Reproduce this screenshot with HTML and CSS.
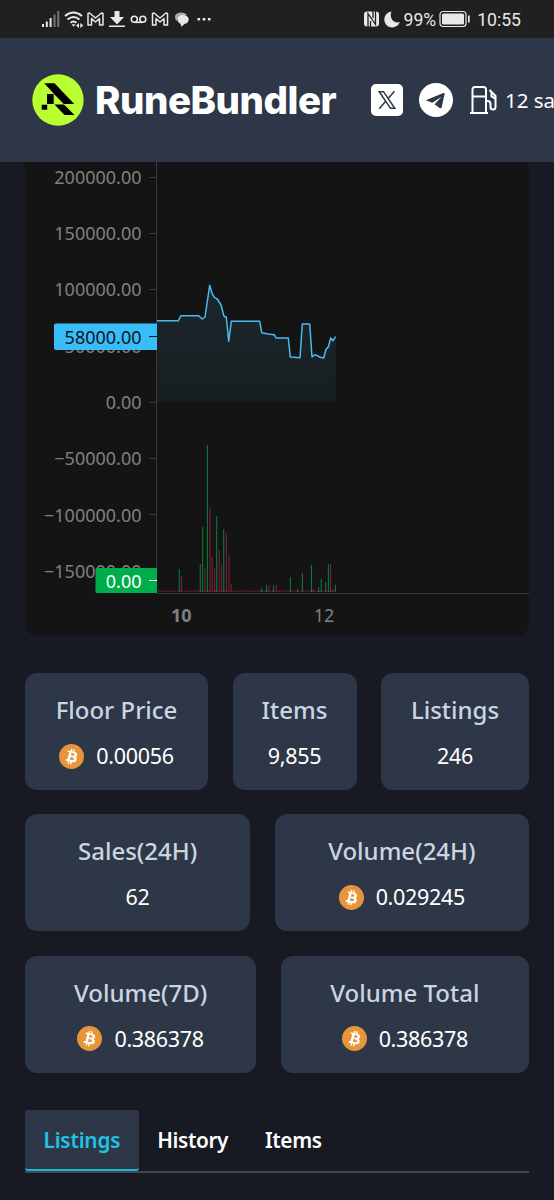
FILE: index.html
```html
<!DOCTYPE html>
<html lang="en">
<head>
  <meta charset="UTF-8">
  <meta name="viewport" content="width=device-width, initial-scale=1.0">
  <title>RuneBundler</title>
  <link rel="stylesheet" href="styles.css">
</head>
<body>
  <!-- shared bitcoin icon -->
  <svg class="defs" width="0" height="0">
    <symbol id="btc" viewBox="0 0 32 32">
      <circle cx="16" cy="16" r="16" fill="#e8953a"/>
      <path fill="#fff" fill-rule="evenodd" d="M23.19 14.02c.31-2.1-1.28-3.23-3.47-3.98l.71-2.85-1.73-.43-.69 2.77c-.46-.11-.93-.22-1.39-.33l.7-2.79-1.74-.43-.7 2.84c-.38-.09-.75-.17-1.11-.26l-2.39-.6-.46 1.85s1.28.3 1.26.31c.7.18.83.64.81 1.01l-1.97 7.89c-.08.22-.31.54-.8.41.02.03-1.26-.31-1.26-.31l-.86 1.99 2.26.56c.42.11.83.22 1.23.32l-.71 2.88 1.73.43.71-2.85c.47.13.93.25 1.38.36l-.71 2.83 1.74.44.71-2.88c2.96.56 5.18.33 6.12-2.34.75-2.16-.04-3.4-1.6-4.21 1.14-.26 2-1.01 2.23-2.56zm-3.96 5.56c-.54 2.15-4.16.99-5.33.7l.95-3.81c1.17.29 4.94.87 4.38 3.11zm.53-5.59c-.49 1.96-3.5.96-4.48.72l.86-3.46c.98.25 4.13.7 3.62 2.74z"/>
    </symbol>
  </svg>

  <div class="statusbar">
    <svg class="status-left" width="172" height="20" viewBox="40 9 172 20" fill="none" stroke="#e8e8e8">
      <path stroke-width="2" d="M43 24v3M46.8 21.500v5.500M50.600 18v9"/>
      <path stroke="#777" stroke-width="2" d="M54.500 14.500v12.500M58.300 11v16"/>
      <path stroke-width="2" d="M65 16q8.500-7 17 0M67.500 19.500q6-5 12 0M70.500 22.700q3-2.500 6 0"/>
      <path fill="#e8e8e8" stroke="none" d="M71.500 24.200h4l-2 2.600zM79 23l-3 2.500 3 2.500zM80.300 23l3 2.500-3 2.500z"/>
      <path id="mail" stroke-width="1.500" stroke-linejoin="round" d="M88 25V13.500l1.500-.5 6 5 6-5 1.500.5V25h-3.500v-6.500l-4 3.500-4-3.500V25z"/>
      <path fill="#e8e8e8" stroke="none" d="M114.500 11h5v6h4.500l-7 7.500-7-7.500h4.500zM109 25.500h16v1.500h-16z"/>
      <circle cx="134.300" cy="19.300" r="3" stroke-width="1.600"/>
      <circle cx="142.800" cy="19.300" r="3" stroke-width="1.600"/>
      <path stroke-width="1.600" d="M134.300 22.300h8.500"/>
      <use href="#mail" x="64.500"/>
      <path fill="#aaa" stroke="none" d="M175 17c0-5.500 10-6 12-2l-8 1-2 5q-2-1-2-4z"/>
      <path fill="#e8e8e8" stroke="none" d="M177.500 19c0-5.500 11-5.500 11.200.2 0 3-2 4.300-4 4.600l-3.200 3-1-3q-3-1-3-4.800z"/>
      <path fill="#e8e8e8" stroke="none" d="M197.500 18h2.600v2.600h-2.600zM202.700 18h2.600v2.600h-2.600zM207.900 18h2.600v2.600h-2.600z"/>
    </svg>
    <div class="status-right">
      <svg width="38" height="20" viewBox="363 9 38 20">
        <rect x="364" y="11.500" width="15" height="15" rx="3" fill="#e8e8e8"/>
        <path fill="none" stroke="#202020" stroke-width="1.300" d="M368 27V13.500l7.500 11V11M370.500 27v-6M373 11v7"/>
        <path fill="#e8e8e8" d="M391.500 11.500a8 8 0 1 0 8.300 10.500c-6 2-11-4-8.300-10.500z"/>
      </svg>
      <span class="percent">99%</span>
      <svg width="32" height="18" viewBox="0 0 32 18">
        <rect x="1" y="1.500" width="26" height="15" rx="3" fill="none" stroke="#e8e8e8" stroke-width="1.200"/>
        <rect x="3" y="3.500" width="22" height="11" rx="1.500" fill="#e8e8e8"/>
        <path fill="#e8e8e8" d="M29 5.500h1.700v7H29z"/>
      </svg>
      <span class="clock">10:55</span>
    </div>
  </div>

  <header class="header">
    <svg class="logo" width="52" height="52" viewBox="32 74 52 52">
      <circle cx="58" cy="100" r="25.700" fill="#b8fe30"/>
      <path d="M44.300 83.300H54.500L74.300 104H63.800L54.500 94.500zM47 94h6.700v10H47zM41.700 104.700h5.500v5h-5.500zM54.500 104.500h9.500l10.500 10.500H64.500z"/>
    </svg>
    <h1 class="brand">RuneBundler</h1>
    <svg class="x-icon" width="32" height="32" viewBox="0 0 32 32">
      <rect width="32" height="32" rx="5" fill="#fff"/>
      <path fill="none" stroke="#2d3748" stroke-width="1.500" d="M8.200 7.700h4.300l11.300 16.600h-4.300zM23.500 7.200l-6.900 7.900M14.900 16.900l-6.700 7.900"/>
    </svg>
    <svg class="telegram" width="34" height="34" viewBox="0 0 34 34">
      <circle cx="17" cy="17" r="17" fill="#fff"/>
      <path fill="#2d3748" d="M6.700 17.200L24.500 10q1.500-.3 1.100 1.300L22.600 24.500q-.6 1.400-2 .5l-5-3.800 7-7.400-9.200 6z"/>
    </svg>
    <svg class="gas" width="28" height="30" viewBox="470 85 28 30" fill="none" stroke="#fff" stroke-width="2">
      <path d="M472.500 113V89.500q0-2.500 2.500-2.500h8.500q2.500 0 2.500 2.500V113M472.500 96.500H486M470 113h18M486 101h1.500q3 0 3 3v3q0 2.500 2.500 2.500t2.500-2.500V96l-6-6"/>
      <path d="M491.500 92.500v4l4 2"/>
    </svg>
    <span class="fee">12 sats/vB</span>
  </header>

  <main>
    <section class="chart">
      <svg width="504" height="474" viewBox="25 162 504 474">
        <defs>
          <linearGradient id="area" x1="0" y1="0" x2="0" y2="1">
            <stop offset="0" stop-color="#1c272d"/>
            <stop offset="1" stop-color="#171e20"/>
          </linearGradient>
        </defs>

        <!-- price -->
        <path fill="url(#area)" d="M157 402V320.700H178.300L181 315.700H198.300L202.300 319L205 317L209.700 285.300L212.300 294L214.700 297.700L217.300 299L221 305L224 316.300L226.300 317.300L228.700 341.300L231.300 321.300H259.700L261.700 332.700L268.300 334L274.300 334.700L276 338H288.300L290.300 357L300 357.700L302.300 324H309.700L312 357L314.700 354.700L317.700 355.700L320 357.300L323.700 358L326 349.300L328.300 347L330.700 338L333 340.700L335.700 336.700V402z"/>
        <path class="price-line" d="M157 320.700H178.300L181 315.700H198.300L202.300 319L205 317L209.700 285.300L212.300 294L214.700 297.700L217.300 299L221 305L224 316.300L226.300 317.300L228.700 341.300L231.300 321.300H259.700L261.700 332.700L268.300 334L274.300 334.700L276 338H288.300L290.300 357L300 357.700L302.300 324H309.700L312 357L314.700 354.700L317.700 355.700L320 357.300L323.700 358L326 349.300L328.300 347L330.700 338L333 340.700L335.700 336.700"/>

        <!-- volume -->
        <path class="vol down dots" d="M158 591.300H335"/>
        <path class="vol up" d="M179.300 592V569M200.300 592V564M202.700 592V527M207.400 592V445M216.700 592V516M223.700 592V529M261.700 592V588M266.400 592V585M273.600 592V585M290.400 592V577M297.600 592V589M302.400 592V573M311.500 592V565M318.700 592V587M321.300 592V579M325.700 592V582M328.400 592V564M335.400 592V585"/>
        <path class="vol down" d="M181.500 592V576M205 592V568M210 592V507M212.200 592V557M214.500 592V568M219.300 592V550M221.600 592V565M226.400 592V533M229 592V555M231.200 592V584M269 592V585M276.300 592V585M313.700 592V589M330.500 592V564M333 592V589"/>

        <!-- axes -->
        <path class="axis" d="M156.500 162V594M156 593.500H529M149 177.500h7M149 233.500h7M149 289.500h7M149 346.500h7M149 402.500h7M149 458.500h7M149 514.500h7M149 571.500h7"/>
        <g class="ylabels">
          <text x="141.500" y="183.500">200000.00</text>
          <text x="141.500" y="239.800">150000.00</text>
          <text x="141.500" y="296.200">100000.00</text>
          <text x="141.500" y="353">50000.00</text>
          <text x="141.500" y="408.500">0.00</text>
          <text x="141.500" y="465">−50000.00</text>
          <text x="141.500" y="521.500">−100000.00</text>
          <text x="141.500" y="577.500">−150000.00</text>
        </g>
        <g class="xlabels">
          <text x="181.300" y="621.500" font-weight="700">10</text>
          <text x="324" y="621.500">12</text>
        </g>

        <!-- current values -->
        <path fill="#38bdf8" d="M157 323.500V350H56q-2 0-2-2V325.500q0-2 2-2z"/>
        <path stroke="#10151a" d="M149 336.500h8"/>
        <text class="tag dark" x="141.500" y="343.500">58000.00</text>
        <path fill="#00ad4c" d="M157 568V593H97q-1.500 0-1.500-1.500V569.500q0-1.500 1.500-1.500z"/>
        <path stroke="#fff" d="M149 580.500h8"/>
        <text class="tag" x="141.500" y="587.500">0.00</text>
      </svg>
    </section>

    <section class="stats">
      <div class="stats-row row-1">
        <div class="card">
          <h2>Floor Price</h2>
          <p><svg class="btc"><use href="#btc"/></svg>0.00056</p>
        </div>
        <div class="card">
          <h2>Items</h2>
          <p>9,855</p>
        </div>
        <div class="card">
          <h2>Listings</h2>
          <p>246</p>
        </div>
      </div>
      <div class="stats-row row-2">
        <div class="card">
          <h2>Sales(24H)</h2>
          <p>62</p>
        </div>
        <div class="card">
          <h2>Volume(24H)</h2>
          <p><svg class="btc"><use href="#btc"/></svg>0.029245</p>
        </div>
      </div>
      <div class="stats-row row-3">
        <div class="card">
          <h2>Volume(7D)</h2>
          <p><svg class="btc"><use href="#btc"/></svg>0.386378</p>
        </div>
        <div class="card">
          <h2>Volume Total</h2>
          <p><svg class="btc"><use href="#btc"/></svg>0.386378</p>
        </div>
      </div>
    </section>

    <nav class="tabs">
      <a class="tab active">Listings</a>
      <a class="tab">History</a>
      <a class="tab">Items</a>
    </nav>
  </main>
</body>
</html>
```
FILE: styles.css
```css
* {
  box-sizing: border-box;
}

body {
  margin: 0;
  height: 1200px;
  overflow: hidden;
  background-color: #171923;
  color: #fff;
  font-family: "Noto Sans", "Open Sans", sans-serif;
}

svg {
  display: block;
  flex-shrink: 0;
}

.defs {
  display: none;
}

.statusbar {
  display: flex;
  justify-content: space-between;
  align-items: center;
  height: 38px;
  padding: 0 33px 0 40px;
  background-color: #202020;
  color: #e8e8e8;
  font-family: Roboto, sans-serif;
  font-size: 17.6px;
}

.status-right {
  display: flex;
  align-items: center;
}

.percent {
  margin: 2px 3px 0 3px;
}

.clock {
  margin: 2px 0 0 6px;
}

.header {
  display: flex;
  align-items: center;
  height: 124px;
  padding-left: 32px;
  background-color: #2d3748;
  overflow: hidden;
  white-space: nowrap;
}

.brand {
  flex-shrink: 0;
  width: 242px;
  margin: 0 34px 0 11px;
  font-family: Inter, sans-serif;
  font-size: 38.5px;
  font-weight: 800;
  letter-spacing: -0.5px;
}

.x-icon {
  margin-right: 16px;
}

.telegram {
  margin-right: 17px;
}

.gas {
  margin-right: 7px;
}

.fee {
  font-size: 20.5px;
}

main {
  padding: 0 25px;
}

.chart {
  border-radius: 0 0 12px 12px;
  background-color: #141414;
  overflow: hidden;
}

.chart text {
  font-size: 18px;
  fill: #808080;
}

.price-line {
  fill: none;
  stroke: #4abaf0;
  stroke-width: 1.5;
  stroke-linejoin: round;
}

.vol {
  fill: none;
  stroke-width: 1.1;
}

.up {
  stroke: #10753f;
}

.down {
  stroke: #762334;
}

.dots {
  stroke-width: 1.4;
  stroke-dasharray: 1.2 1.17;
}

.axis {
  fill: none;
  stroke: #3a3a3a;
}

.ylabels,
.tag {
  text-anchor: end;
}

.xlabels {
  text-anchor: middle;
}

.chart .tag {
  fill: #fff;
}

.chart .dark {
  fill: #10151a;
}

.stats {
  display: flex;
  flex-direction: column;
  gap: 24.5px;
  margin-top: 37px;
}

.stats-row {
  display: grid;
  gap: 24.5px;
}

.row-1 {
  grid-template-columns: 183fr 124fr 148fr;
}

.row-2 {
  grid-template-columns: 225fr 254fr;
}

.row-3 {
  grid-template-columns: 231fr 248fr;
}

.card {
  height: 116.9px;
  padding-top: 18px;
  border-radius: 12px;
  background-color: #2d3748;
  text-align: center;
}

.card h2 {
  margin: 0;
  color: #cbd5e0;
  font-size: 24px;
  font-weight: 500;
  line-height: 38px;
}

.card p {
  display: flex;
  justify-content: center;
  align-items: center;
  gap: 12px;
  margin: 9px 0 0;
  font-size: 21.5px;
  letter-spacing: -0.3px;
  line-height: 36px;
}

.btc {
  width: 25px;
  height: 25px;
}

.tabs {
  display: flex;
  height: 63px;
  margin-top: 37.3px;
  border-bottom: 2px solid #434752;
}

.tab {
  height: 61px;
  padding: 0 18.5px;
  border-bottom: 2px solid transparent;
  font-size: 20.8px;
  font-weight: 600;
  letter-spacing: -0.2px;
  line-height: 61px;
}

.tab + .tab {
  letter-spacing: -0.4px;
}

.active {
  border-color: #22b8d4;
  border-radius: 3px;
  background-color: #2d3748;
  color: #1fc4e4;
}
```
